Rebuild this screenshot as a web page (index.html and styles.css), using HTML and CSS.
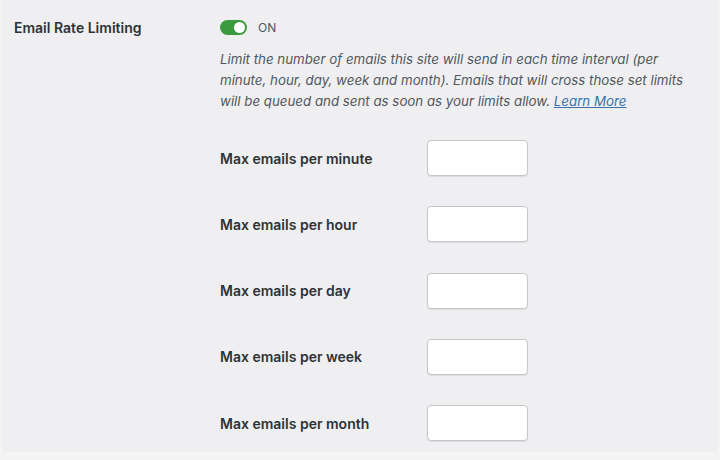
FILE: index.html
```html
<!DOCTYPE html>
<html>
<head>
<meta charset="utf-8">
<link rel="stylesheet" href="styles.css">
</head>
<body>
<div class="panel">
  <div class="setting">
    <div class="setting-label">Email Rate Limiting</div>
    <div class="setting-body">
      <div class="toggle-row">
        <span class="toggle"><span class="knob"></span></span>
        <span class="toggle-text">ON</span>
      </div>
      <p class="desc">Limit the number of emails this site will send in each time interval (per minute, hour, day, week and month). Emails that will cross those set limits will be queued and sent as soon as your limits allow. <a href="#" class="link">Learn More</a></p>
      <div class="limits">
        <div class="limit-row"><label class="limit-label">Max emails per minute</label><input class="limit-input" type="text"></div>
        <div class="limit-row"><label class="limit-label">Max emails per hour</label><input class="limit-input" type="text"></div>
        <div class="limit-row"><label class="limit-label">Max emails per day</label><input class="limit-input" type="text"></div>
        <div class="limit-row"><label class="limit-label">Max emails per week</label><input class="limit-input" type="text"></div>
        <div class="limit-row"><label class="limit-label">Max emails per month</label><input class="limit-input" type="text"></div>
      </div>
    </div>
  </div>
</div>
</body>
</html>
```
FILE: styles.css
```css
* { box-sizing: border-box; }
html, body { margin: 0; padding: 0; }
body {
  width: 720px;
  height: 460px;
  overflow: hidden;
  background: #f4f4f5;
  font-family: Inter, "Noto Sans", sans-serif;
  color: #1d2327;
}
.panel {
  height: 452px;
  margin: 0 2px;
  background: #efeff1;
  padding: 19px 0 0 12px;
}
.setting {
  display: flex;
}
.setting-label {
  width: 206px;
  font-size: 14px;
  font-weight: 600;
  color: #2c3338;
  line-height: 17px;
}
.setting-body {
  flex: 1;
}
.toggle-row {
  display: flex;
  align-items: center;
  gap: 11px;
  height: 17px;
}
.toggle {
  display: flex;
  align-items: center;
  justify-content: flex-end;
  width: 27px;
  height: 15px;
  border-radius: 8px;
  background: #3a9a40;
  padding: 2px;
}
.knob {
  width: 11px;
  height: 11px;
  border-radius: 50%;
  background: #fff;
}
.toggle-text {
  font-size: 12px;
  color: #50575e;
}
.desc {
  margin: 13px 0 0;
  font-size: 13.3px;
  line-height: 21px;
  font-style: italic;
  color: #50575e;
  width: 470px;
}
.link {
  color: #3b72ad;
  text-decoration: underline;
}
.limits {
  display: flex;
  flex-direction: column;
  gap: 30.25px;
  margin-top: 28px;
}
.limit-row {
  display: flex;
  align-items: center;
}
.limit-label {
  width: 207px;
  font-size: 14px;
  font-weight: 600;
  color: #2c3338;
}
.limit-input {
  width: 101px;
  height: 36px;
  border: 1px solid #c6c6c8;
  border-radius: 4px;
  background: #fff;
  box-shadow: 0 1px 1px rgba(0,0,0,0.08);
  margin: 0;
  padding: 0 8px;
}
```
